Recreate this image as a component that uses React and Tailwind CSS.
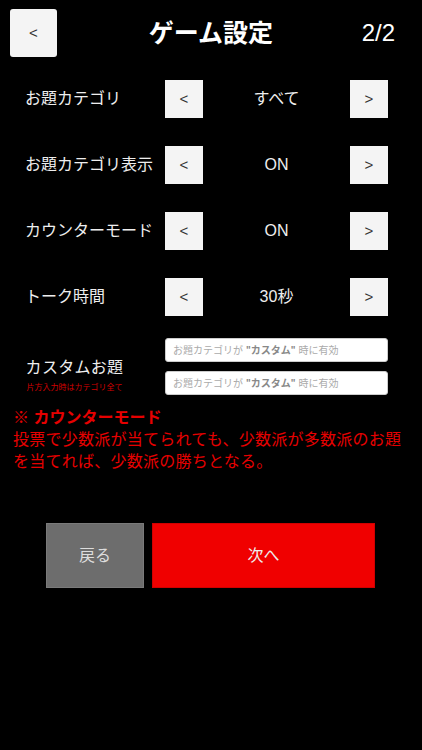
const font = { fontFamily: '"Liberation Sans", "Noto Sans CJK JP", sans-serif' }

const rows = [
  { label: 'お題カテゴリ', value: 'すべて' },
  { label: 'お題カテゴリ表示', value: 'ON' },
  { label: 'カウンターモード', value: 'ON' },
  { label: 'トーク時間', value: '30秒' },
]

function StepButton({ children }) {
  return (
    <button className="flex h-[38px] w-[38px] shrink-0 items-center justify-center bg-[#f4f4f4] text-[15px] text-[#333]">
      {children}
    </button>
  )
}

function CustomInput() {
  return (
    <div className="flex h-[24px] items-center rounded-[3px] border border-[#ccc] bg-white pl-[7px] text-[10px] text-[#aaa]">
      お題カテゴリが <span className="mx-[3px] font-bold text-[#888]">"カスタム"</span> 時に有効
    </div>
  )
}

export default function App() {
  return (
    <div className="min-h-[750px] w-[422px] bg-black" style={font}>
      <header className="grid grid-cols-[47px_1fr_47px] items-center px-[10px] pt-[9px]">
        <button className="flex h-[48px] w-[47px] items-center justify-center rounded-[3px] bg-[#f4f4f4] text-[15px] text-[#333]">
          &lt;
        </button>
        <h1 className="text-center text-[25px] font-bold leading-[48px] text-white">ゲーム設定</h1>
        <div className="flex justify-end whitespace-nowrap pr-[17px] text-[24px] leading-[48px] text-white">2/2</div>
      </header>

      <div className="mt-[23px] flex flex-col gap-[28px]">
        {rows.map((row) => (
          <div key={row.label} className="flex items-center pl-[25px] pr-[34px]">
            <span className="w-[140px] whitespace-nowrap text-[16px] text-[#eee]">{row.label}</span>
            <StepButton>&lt;</StepButton>
            <span className="flex-1 text-center text-[16px] text-[#eee]">{row.value}</span>
            <StepButton>&gt;</StepButton>
          </div>
        ))}
      </div>

      <div className="mt-[22px] flex items-center">
        <div className="w-[165px] pl-[26px] pt-[16px]">
          <div className="flex w-[97px] flex-col items-center">
            <span className="whitespace-nowrap text-[16px] tracking-[0.3px] text-[#eee]">カスタムお題</span>
            <span className="mt-[2px] whitespace-nowrap text-[8px] text-[#d00000]">片方入力時はカテゴリ全て</span>
          </div>
        </div>
        <div className="flex w-[223px] flex-col gap-[9px]">
          <CustomInput />
          <CustomInput />
        </div>
      </div>

      <div className="mt-[12px] px-[13px] text-[#e60000]">
        <p className="text-[16px] font-bold leading-[22px]">※ カウンターモード</p>
        <p className="text-[16px] leading-[22px] tracking-[0.25px]">
          投票で少数派が当てられても、少数派が多数派のお題を当てれば、少数派の勝ちとなる。
        </p>
      </div>

      <div className="mt-[50px] flex justify-center gap-[8px] pr-[1px]">
        <button className="h-[65px] w-[98px] border border-[#7a7a7a] bg-[#6d6d6d] text-[16px] text-[#ddd]">戻る</button>
        <button className="h-[65px] w-[223px] border border-[#d00000] bg-[#f00000] text-[16px] text-[#eee]">次へ</button>
      </div>
    </div>
  )
}
